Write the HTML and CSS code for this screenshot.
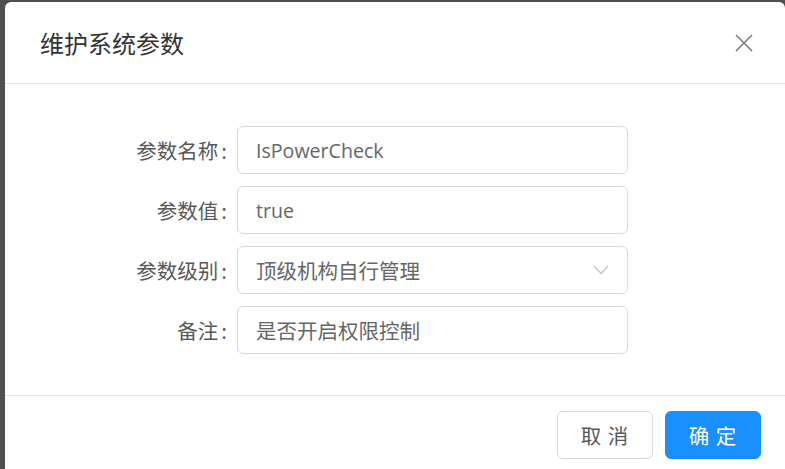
FILE: index.html
```html
<!DOCTYPE html>
<html lang="zh-CN">
<head>
<meta charset="utf-8">
<title>维护系统参数</title>
<link rel="stylesheet" href="styles.css">
</head>
<body>
<div class="backdrop">
  <div class="modal">
    <div class="modal-header">
      <div class="modal-title">维护系统参数</div>
      <button class="modal-close" aria-label="关闭">
        <svg width="18" height="18" viewBox="0 0 18 18"><path d="M1 1 L17 17 M17 1 L1 17" stroke="#808080" stroke-width="1.7" fill="none"/></svg>
      </button>
    </div>
    <div class="modal-body">
      <form class="form">
        <div class="form-row">
          <label class="form-label">参数名称</label>
          <div class="input latin">IsPowerCheck</div>
        </div>
        <div class="form-row">
          <label class="form-label">参数值</label>
          <div class="input latin">true</div>
        </div>
        <div class="form-row">
          <label class="form-label">参数级别</label>
          <div class="input select">
            <span>顶级机构自行管理</span>
            <svg class="arrow" width="16" height="10" viewBox="0 0 16 10"><path d="M1 1 L8 8.5 L15 1" stroke="#c4c4c4" stroke-width="1.4" fill="none"/></svg>
          </div>
        </div>
        <div class="form-row">
          <label class="form-label">备注</label>
          <div class="input">是否开启权限控制</div>
        </div>
      </form>
    </div>
    <div class="modal-footer">
      <button class="btn">取 消</button>
      <button class="btn btn-primary">确 定</button>
    </div>
  </div>
</div>
</body>
</html>
```
FILE: styles.css
```css
html, body {
  margin: 0;
  padding: 0;
  height: 100%;
}
body {
  background: #4f4f4f;
  font-family: "Noto Sans", "Noto Sans CJK SC", sans-serif;
  overflow: hidden;
}
.backdrop {
  padding: 2px 0 0 5px;
}
.modal {
  width: 780px;
  height: 520px;
  background: #fff;
  border-radius: 6px;
  box-sizing: border-box;
}
.modal-header {
  height: 81px;
  border-bottom: 1px solid #e8e8e8;
  display: flex;
  align-items: center;
  justify-content: space-between;
  padding: 0 32px 0 35px;
}
.modal-title {
  font-family: "Noto Sans CJK SC", sans-serif;
  font-size: 24px;
  color: #333;
  line-height: 1;
}
.modal-close {
  border: 0;
  background: none;
  padding: 0;
  margin: 0;
  width: 18px;
  height: 18px;
  display: flex;
}
.modal-body {
  padding: 42px 36px 41px 36px;
}
.form {
  display: flex;
  flex-direction: column;
  gap: 12px;
}
.form-row {
  display: grid;
  grid-template-columns: 186px 391px;
  column-gap: 10px;
  align-items: center;
}
.form-label {
  text-align: right;
  font-family: "Noto Sans CJK SC", sans-serif;
  font-size: 20.5px;
  color: #595959;
}
.form-label::after {
  content: ":";
  margin-left: 3px;
}
.input {
  height: 48px;
  box-sizing: border-box;
  border: 1px solid #d9d9d9;
  border-radius: 6px;
  padding: 0 18px;
  display: flex;
  align-items: center;
  font-family: "Noto Sans CJK SC", sans-serif;
  font-size: 20.5px;
  color: #666;
}
.latin {
  font-family: "Open Sans", "Noto Sans", sans-serif;
  font-size: 19.6px;
}
.select {
  justify-content: space-between;
}
.modal-footer {
  border-top: 1px solid #e8e8e8;
  padding: 15px 24px;
  display: flex;
  justify-content: flex-end;
  gap: 12px;
}
.btn {
  width: 96px;
  height: 48px;
  border-radius: 6px;
  border: 1px solid #d9d9d9;
  background: #fff;
  font-family: "Noto Sans CJK SC", sans-serif;
  font-size: 20.5px;
  color: #595959;
  padding: 0;
  letter-spacing: 1px;
}
.btn-primary {
  background: #1890ff;
  border-color: #1890ff;
  color: #fff;
}
```
